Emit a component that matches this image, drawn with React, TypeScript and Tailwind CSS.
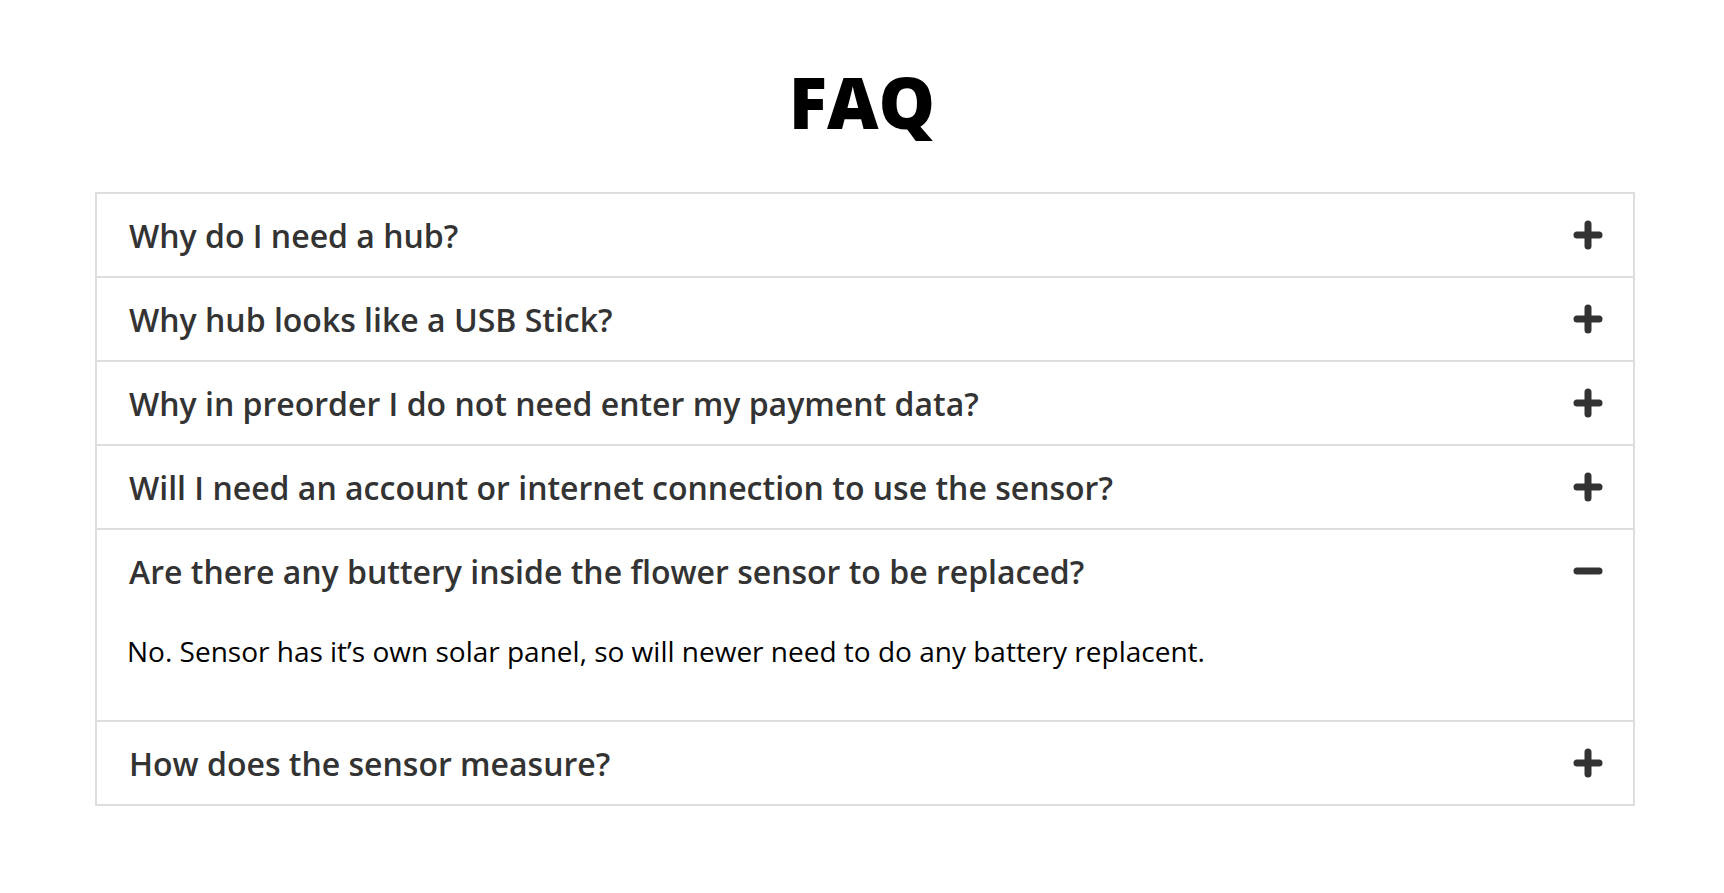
import React, { useState } from "react";

const items = [
  { q: "Why do I need a hub?", a: "" },
  { q: "Why hub looks like a USB Stick?", a: "" },
  { q: "Why in preorder I do not need enter my payment data?", a: "" },
  { q: "Will I need an account or internet connection to use the sensor?", a: "" },
  {
    q: "Are there any buttery inside the flower sensor to be replaced?",
    a: "No. Sensor has it\u2019s own solar panel, so will newer need to do any battery replacent.",
  },
  { q: "How does the sensor measure?", a: "" },
];

function Icon({ open }: { open: boolean }) {
  return (
    <svg width="30" height="30" viewBox="0 0 30 30" className="shrink-0">
      <line x1="4" y1="15" x2="26" y2="15" stroke="#333" strokeWidth="7" strokeLinecap="round" />
      {!open && <line x1="15" y1="4" x2="15" y2="26" stroke="#333" strokeWidth="7" strokeLinecap="round" />}
    </svg>
  );
}

export default function App() {
  const [open, setOpen] = useState<number>(4);
  return (
    <div className="min-h-screen bg-white pt-[58px]" style={{ fontFamily: "'Open Sans', sans-serif" }}>
      <h1 className="text-center text-[71px] leading-[88px] font-extrabold text-black">FAQ</h1>
      <div className="ml-[95px] mt-[46px] w-[1540px] border-2 border-[#dedede]">
        {items.map((it, i) => (
          <div key={i} className={i > 0 ? "border-t-2 border-[#dedede]" : ""}>
            <button
              onClick={() => setOpen(open === i ? -1 : i)}
              className="flex h-[82px] w-full items-center justify-between pl-[32px] pr-[30px] text-left"
            >
              <span className="mt-[2px] text-[32px] font-semibold text-[#333]">{it.q}</span>
              <Icon open={open === i} />
            </button>
            {open === i && (
              <div className="h-[108px] pl-[30px] pt-[18px] text-[28px] text-black">{it.a}</div>
            )}
          </div>
        ))}
      </div>
    </div>
  );
}
